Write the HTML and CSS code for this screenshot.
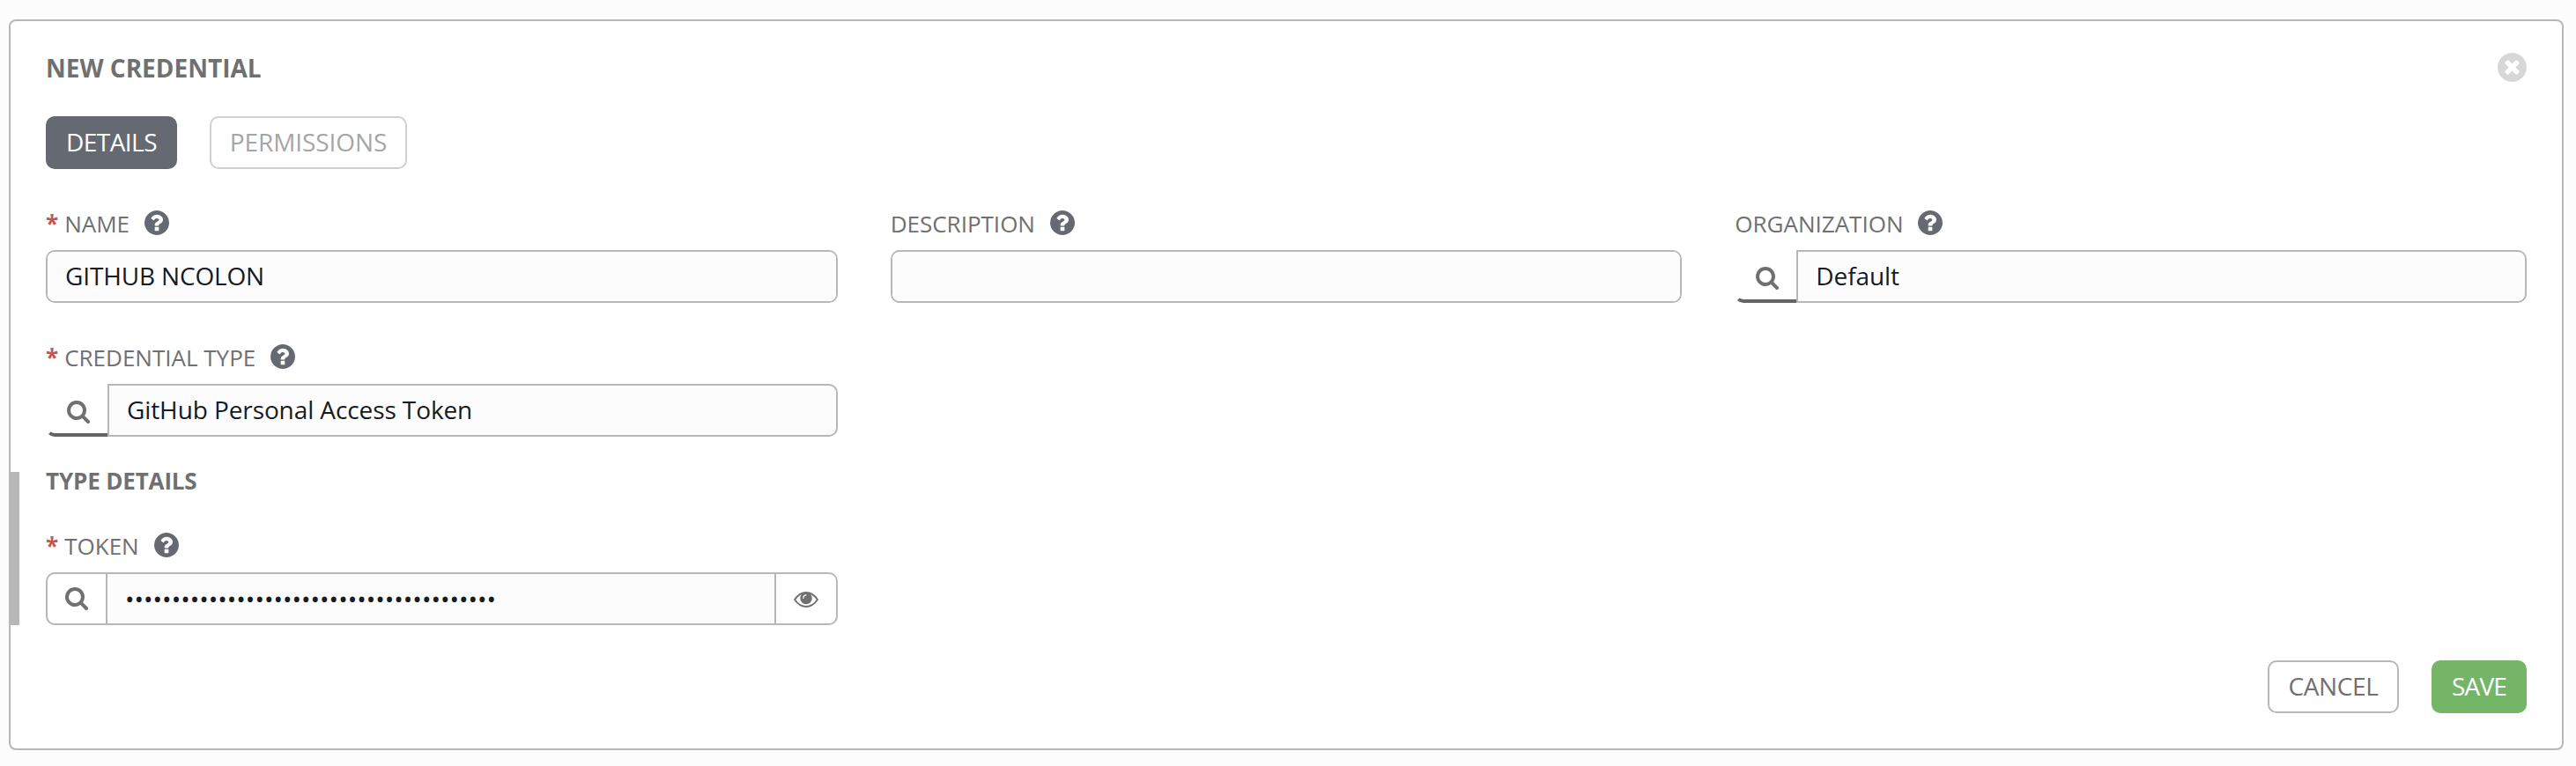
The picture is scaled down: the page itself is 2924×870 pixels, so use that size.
FILE: index.html
```html
<!DOCTYPE html>
<html lang="en">
<head>
<meta charset="utf-8">
<title>New Credential</title>
<link rel="stylesheet" href="styles.css">
</head>
<body>
<svg class="sprite" aria-hidden="true">
  <symbol id="search" viewBox="64 128 1664 1664"><path d="M1216 832q0-185-131.500-316.500t-316.500-131.500-316.500 131.500-131.500 316.500 131.500 316.500 316.500 131.500 316.500-131.500 131.500-316.500zm512 832q0 52-38 90t-90 38q-54 0-90-38l-343-342q-179 124-399 124-143 0-273.500-55.500t-225-150-150-225-55.500-273.500 55.500-273.500 150-225 225-150 273.500-55.500 273.500 55.500 225 150 150 225 55.500 273.500q0 220-124 399l343 343q37 37 37 90z"/></symbol>
  <symbol id="help" viewBox="128 128 1536 1536"><path d="M1024 1376v-192q0-14-9-23t-23-9h-192q-14 0-23 9t-9 23v192q0 14 9 23t23 9h192q14 0 23-9t9-23zm256-672q0-88-55.500-163t-138.500-116-170-41q-243 0-371 213-15 24 8 42l132 100q7 6 19 6 16 0 25-12 53-68 86-92 34-24 86-24 48 0 85.500 26t37.500 59q0 38-20 61t-68 45q-63 28-115.500 86.500t-52.500 125.500v36q0 14 9 23t23 9h192q14 0 23-9t9-23q0-19 21.500-49.500t54.500-49.500q32-18 49-28.500t46-35 44.500-48 28-60.500 12.500-81zm384 192q0 209-103 385.500t-279.500 279.500-385.500 103-385.500-103-279.500-279.500-103-385.500 103-385.500 279.500-279.500 385.500-103 385.500 103 279.500 279.500 103 385.500z"/></symbol>
  <symbol id="close" viewBox="128 128 1536 1536"><path d="M1277 1122q0-26-19-45l-181-181 181-181q19-19 19-45 0-27-19-46l-90-90q-19-19-46-19-26 0-45 19l-181 181-181-181q-19-19-45-19-27 0-46 19l-90 90q-19 19-19 46 0 26 19 45l181 181-181 181q-19 19-19 45 0 27 19 46l90 90q19 19 46 19 26 0 45-19l181-181 181 181q19 19 45 19 27 0 46-19l90-90q19-19 19-46zm387-226q0 209-103 385.500t-279.500 279.500-385.500 103-385.500-103-279.500-279.500-103-385.500 103-385.500 279.500-279.500 385.500-103 385.500 103 279.500 279.500 103 385.500z"/></symbol>
  <symbol id="eye" viewBox="0 0 28 18"><path d="M1 9Q6.500 1 14 1T27 9Q21.500 17 14 17T1 9Z" fill="none" stroke="currentColor" stroke-width="1.900"/><circle cx="14" cy="7.500" r="6.700"/><path d="M10.800 7.500Q10.800 4 14 3.800" fill="none" stroke="#fff" stroke-width="1.200" stroke-linecap="round"/></symbol>
</svg>
<main class="panel">
  <header class="panel-header">
    <h1 class="title">NEW CREDENTIAL</h1>
    <svg class="close"><use href="#close"/></svg>
  </header>
  <nav class="tabs">
    <button class="btn btn-active">DETAILS</button>
    <button class="btn btn-disabled">PERMISSIONS</button>
  </nav>
  <form class="form">
    <div class="field">
      <div class="label"><span class="required">*</span>NAME<svg class="help"><use href="#help"/></svg></div>
      <div class="control"><div class="value">GITHUB NCOLON</div></div>
    </div>
    <div class="field">
      <div class="label">DESCRIPTION<svg class="help"><use href="#help"/></svg></div>
      <div class="control"><div class="value"></div></div>
    </div>
    <div class="field">
      <div class="label">ORGANIZATION<svg class="help"><use href="#help"/></svg></div>
      <div class="lookup"><div class="lookup-btn"><svg class="search"><use href="#search"/></svg></div><div class="lookup-value">Default</div></div>
    </div>
    <div class="field">
      <div class="label"><span class="required">*</span>CREDENTIAL TYPE<svg class="help"><use href="#help"/></svg></div>
      <div class="lookup"><div class="lookup-btn"><svg class="search"><use href="#search"/></svg></div><div class="lookup-value">GitHub Personal Access Token</div></div>
    </div>
  </form>
  <section class="type-details">
    <h2 class="subtitle">TYPE DETAILS</h2>
    <div class="field">
      <div class="label"><span class="required">*</span>TOKEN<svg class="help"><use href="#help"/></svg></div>
      <div class="control"><div class="addon"><svg class="search"><use href="#search"/></svg></div><div class="value masked">••••••••••••••••••••••••••••••••••••••••</div><div class="addon reveal"><svg class="eye"><use href="#eye"/></svg></div></div>
    </div>
  </section>
  <footer class="actions">
    <button class="btn btn-cancel">CANCEL</button>
    <button class="btn btn-save">SAVE</button>
  </footer>
</main>
</body>
</html>
```
FILE: styles.css
```css
* { box-sizing: border-box; }

body {
  margin: 0;
  padding: 22px 14px 18px 10px;
  background: #fcfcfc;
  font-family: "Open Sans", "Noto Sans", sans-serif;
  font-size: 28px;
  color: #707070;
}

svg { display: block; flex: none; fill: currentColor; }
.sprite { position: absolute; width: 0; height: 0; }

.panel {
  height: 830px;
  padding: 34px 40px 40px;
  border: 2px solid #b7b7b7;
  border-radius: 8px;
  background: #fff;
}

.panel-header {
  display: flex;
  align-items: center;
  justify-content: space-between;
  height: 38px;
}
.title { margin: 0; font-size: 28px; font-weight: 700; line-height: 38px; }
.close { width: 33px; height: 33px; margin-bottom: 1px; color: #d7d7d7; }

.tabs { display: flex; gap: 37px; margin-top: 36px; }

.btn {
  height: 60px;
  padding: 0 0 2px;
  border: 2px solid #b7b7b7;
  border-radius: 10px;
  background: #fff;
  color: #707070;
  font: inherit;
  line-height: 54px;
}
.btn-active { width: 149px; border-color: #646972; background: #646972; color: #fff; letter-spacing: -0.55px; }
.btn-disabled { width: 224px; border-color: #d0d0d0; color: #a6a6a6; letter-spacing: -0.1px; }
.btn-cancel { width: 149px; letter-spacing: -0.35px; }
.btn-save { width: 108px; border-color: #75b567; background: #75b567; color: #fff; letter-spacing: -0.85px; }

.form {
  display: grid;
  grid-template-columns: repeat(3, 1fr);
  column-gap: 60px;
  row-gap: 40px;
  margin-top: 40px;
}

.label {
  display: flex;
  align-items: center;
  height: 40px;
  margin-bottom: 12px;
  padding-top: 4px;
  font-size: 26px;
  line-height: 36px;
  white-space: pre;
}
.required { margin-right: 7px; color: #c9544c; font-weight: 700; }
.help { width: 28px; height: 28px; margin: 0 0 3px 17px; color: #646972; }

.control {
  display: flex;
  height: 60px;
  overflow: hidden;
  border: 2px solid #b7b7b7;
  border-radius: 10px;
  background: #fff;
}
.value { flex: 1; padding-left: 20px; background: #fcfcfc; color: #161b1f; line-height: 55px; letter-spacing: -0.15px; }
.masked { line-height: 57px; letter-spacing: 0; }
.addon {
  display: flex;
  align-items: center;
  justify-content: center;
  width: 68px;
  border-right: 2px solid #b7b7b7;
}
.reveal { width: 70px; border-right: 0; border-left: 2px solid #b7b7b7; }
.search { width: 26px; height: 26px; }
.eye { width: 28px; height: 18px; margin-top: 2px; }

.lookup { display: flex; height: 60px; }
.lookup-btn {
  display: flex;
  align-items: center;
  justify-content: center;
  width: 70px;
  padding: 7px 1px 0 0;
  border: 0 solid transparent;
  border-width: 0 0 4px 4px;
  border-bottom-color: #646464;
  border-radius: 0 0 0 10px;
}
.lookup-value {
  flex: 1;
  padding-left: 20px;
  border: 2px solid #b7b7b7;
  border-radius: 0 10px 10px 0;
  background: #fcfcfc;
  color: #161b1f;
  line-height: 55px;
  letter-spacing: -0.1px;
}

.type-details {
  width: 939px;
  height: 174px;
  margin: 40px 0 0 -40px;
  padding-left: 30px;
  border-left: 10px solid #b7b7b7;
}
.subtitle { margin: 0 0 42px; font-size: 26px; font-weight: 700; line-height: 20px; letter-spacing: -0.15px; }

.actions { display: flex; justify-content: flex-end; gap: 37px; margin-top: 40px; }
```
